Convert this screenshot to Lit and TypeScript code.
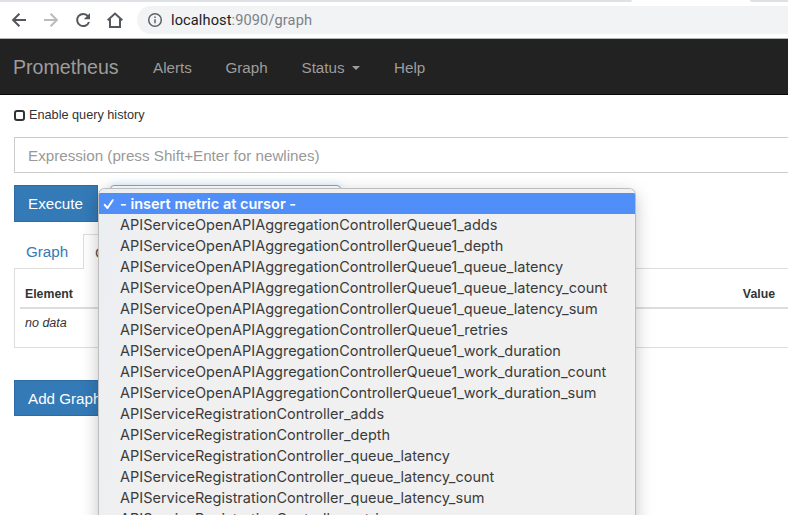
import { LitElement, html, css } from "lit";
import { customElement, state } from "lit/decorators.js";

const AGG = "APIServiceOpenAPIAggregationControllerQueue1";
const REG = "APIServiceRegistrationController";

@customElement("browser-toolbar")
class BrowserToolbar extends LitElement {
  static styles = css`
    :host { display: block; height: 39px; box-sizing: border-box; border-bottom: 1px solid #b1b4b4; background: #fff; font-family: Roboto, sans-serif; }
    .tabs { display: flex; justify-content: space-between; height: 2px; }
    .tab-left { width: 632px; background: #dee1e6; border-bottom-right-radius: 3px; }
    .tab-right { width: 38px; background: #dee1e6; border-bottom-left-radius: 3px; }
    .bar { display: flex; align-items: center; height: 28px; padding: 4px 0 0 8px; }
    .icons { display: flex; width: 129px; gap: 10px; }
    .icons svg { width: 22px; height: 22px; fill: none; stroke: #54585d; stroke-width: 2; flex: none; }
    .icons .off { stroke: #babcbe; }
    .icons .solid { fill: #54585d; stroke: none; }
    .address { flex: 1; display: flex; align-items: center; height: 28px; border-radius: 14px 0 0 14px; background: #f1f3f4; }
    .info { width: 16px; height: 16px; margin-left: 10px; fill: none; stroke: #5f6368; stroke-width: 1.5; }
    .url { margin-left: 8px; font-size: 14.6px; line-height: 20px; color: #7d8185; white-space: nowrap; letter-spacing: 0.1px; }
    .host { color: #202124; }
  `;
  render() {
    return html`
      <div class="tabs"><div class="tab-left"></div><div class="tab-right"></div></div>
      <div class="bar">
        <div class="icons">
          <svg viewBox="0 0 22 22"><path d="M18 11H5.3M11.4 4.7 5.1 11l6.3 6.3" /></svg>
          <svg class="off" viewBox="0 0 22 22"><path d="M4 11h12.7M10.6 4.7l6.3 6.3-6.3 6.3" /></svg>
          <svg viewBox="0 0 22 22"><path d="M16.1 7.3A6.1 6.1 0 1 0 17 13" /><path class="solid" d="M18 4v6.2h-6.2z" /></svg>
          <svg viewBox="0 0 22 22"><path d="M3.7 11.3 11 4.5l7.3 6.8M6 10v8h10v-8" /></svg>
        </div>
        <div class="address">
          <svg class="info" viewBox="0 0 16 16"><circle cx="8" cy="8" r="6.3" /><path d="M8 7.2v4.1M8 4.5v1.6" /></svg>
          <div class="url"><span class="host">localhost</span>:9090/graph</div>
        </div>
      </div>
    `;
  }
}

@customElement("metric-menu")
class MetricMenu extends LitElement {
  @state() metrics = [
    ...["adds", "depth", "queue_latency", "queue_latency_count", "queue_latency_sum", "retries", "work_duration", "work_duration_count", "work_duration_sum"].map((s) => `${AGG}_${s}`),
    ...["adds", "depth", "queue_latency", "queue_latency_count", "queue_latency_sum", "retries"].map((s) => `${REG}_${s}`),
  ];
  static styles = css`
    :host { display: block; box-sizing: border-box; padding-top: 4px; background: linear-gradient(100deg, #ebeef2 0, #f0f0f0 90px); border-radius: 6px 6px 0 0; box-shadow: 0 0 0 1px #bdbdbd, 0 5px 18px rgba(0, 0, 0, 0.26); font-family: Inter, sans-serif; font-size: 14.5px; color: #3b3b3b; overflow: hidden; }
    .row { display: flex; align-items: center; height: 21px; padding-left: 21px; white-space: nowrap; }
    .active { background: #4f8ff7; color: #fff; font-weight: 600; padding-left: 4px; }
    .check { width: 12px; height: 12px; margin-right: 5px; fill: none; stroke: #fff; stroke-width: 2; stroke-linecap: round; stroke-linejoin: round; }
  `;
  render() {
    return html`
      <div class="row active">
        <svg class="check" viewBox="0 0 12 12"><path d="M1.7 6.8 4.5 10 9.7 2.2" /></svg>
        <span>- insert metric at cursor -</span>
      </div>
      ${this.metrics.map((m) => html`<div class="row"><span>${m}</span></div>`)}
    `;
  }
}

@customElement("app-root")
class AppRoot extends LitElement {
  static styles = css`
    :host { display: block; position: relative; width: 788px; height: 515px; overflow: hidden; background: #fff; font-family: "Liberation Sans", Arial, sans-serif; font-size: 15.2px; color: #333; }
    .nav { display: flex; align-items: center; height: 56px; box-sizing: border-box; padding: 2px 0 0 13px; background: #222; border-bottom: 1px solid #080808; color: #9d9d9d; }
    .brand { width: 140px; font-size: 19.6px; }
    .alerts { width: 72.5px; }
    .graph { width: 76px; }
    .status { display: flex; align-items: center; width: 92.5px; gap: 7px; }
    .caret { border: 4.5px solid transparent; border-top-color: #9d9d9d; border-bottom: 0; }
    .page { padding-left: 14px; }
    .history { display: flex; align-items: center; height: 40px; gap: 5px; font-size: 12.7px; }
    .box { width: 11px; height: 11px; box-sizing: border-box; border: 2px solid #333; border-radius: 3px; margin-right: -1px; }
    .expression { display: flex; align-items: center; width: 800px; height: 36px; box-sizing: border-box; margin-top: 2px; padding-left: 13px; border: 1px solid #ccc; color: #999; white-space: nowrap; }
    .controls { display: flex; gap: 12px; margin-top: 12px; height: 37px; }
    .btn { display: flex; align-items: center; box-sizing: border-box; background: #337ab7; border: 1px solid #2e6da4; color: #fff; padding-left: 13px; white-space: nowrap; }
    .execute { width: 84px; height: 37px; }
    .select { width: 231px; height: 36px; box-sizing: border-box; border: 1px solid #66afe9; border-radius: 4px; box-shadow: 0 0 8px rgba(102, 175, 233, 0.35); }
    .tabs { display: flex; height: 35px; margin-top: 12px; }
    .tab { display: flex; align-items: center; box-sizing: border-box; padding-left: 12px; width: 69px; border-bottom: 1px solid #ddd; color: #337ab7; }
    .tab.on { width: 80px; border: 1px solid #ddd; border-bottom: 0; color: #555; padding-left: 11px; }
    .tab-rest { flex: 1; border-bottom: 1px solid #ddd; }
    .panel { height: 79px; box-sizing: border-box; border-left: 1px solid #ddd; border-bottom: 1px solid #ddd; padding-left: 5px; font-size: 12.5px; }
    .head { display: flex; height: 40px; box-sizing: border-box; align-items: center; padding: 11px 13px 0 5px; border-bottom: 2px solid #ddd; justify-content: space-between; font-weight: 700; font-size: 12.3px; }
    .none { padding: 7px 0 0 5px; font-style: italic; }
    .add { width: 100px; height: 36px; margin-top: 32px; }
    metric-menu { position: absolute; left: 99px; top: 189px; width: 536px; }
  `;
  render() {
    return html`
      <browser-toolbar></browser-toolbar>
      <nav class="nav">
        <div class="brand">Prometheus</div>
        <div class="alerts">Alerts</div>
        <div class="graph">Graph</div>
        <div class="status">Status<span class="caret"></span></div>
        <div>Help</div>
      </nav>
      <main class="page">
        <div class="history"><span class="box"></span><span>Enable query history</span></div>
        <div class="expression">Expression (press Shift+Enter for newlines)</div>
        <div class="controls"><div class="btn execute">Execute</div><div class="select"></div></div>
        <div class="tabs"><div class="tab">Graph</div><div class="tab on">Console</div><div class="tab-rest"></div></div>
        <div class="panel">
          <div class="head"><span>Element</span><span>Value</span></div>
          <div class="none">no data</div>
        </div>
        <div class="btn add">Add Graph</div>
      </main>
      <metric-menu></metric-menu>
    `;
  }
}
